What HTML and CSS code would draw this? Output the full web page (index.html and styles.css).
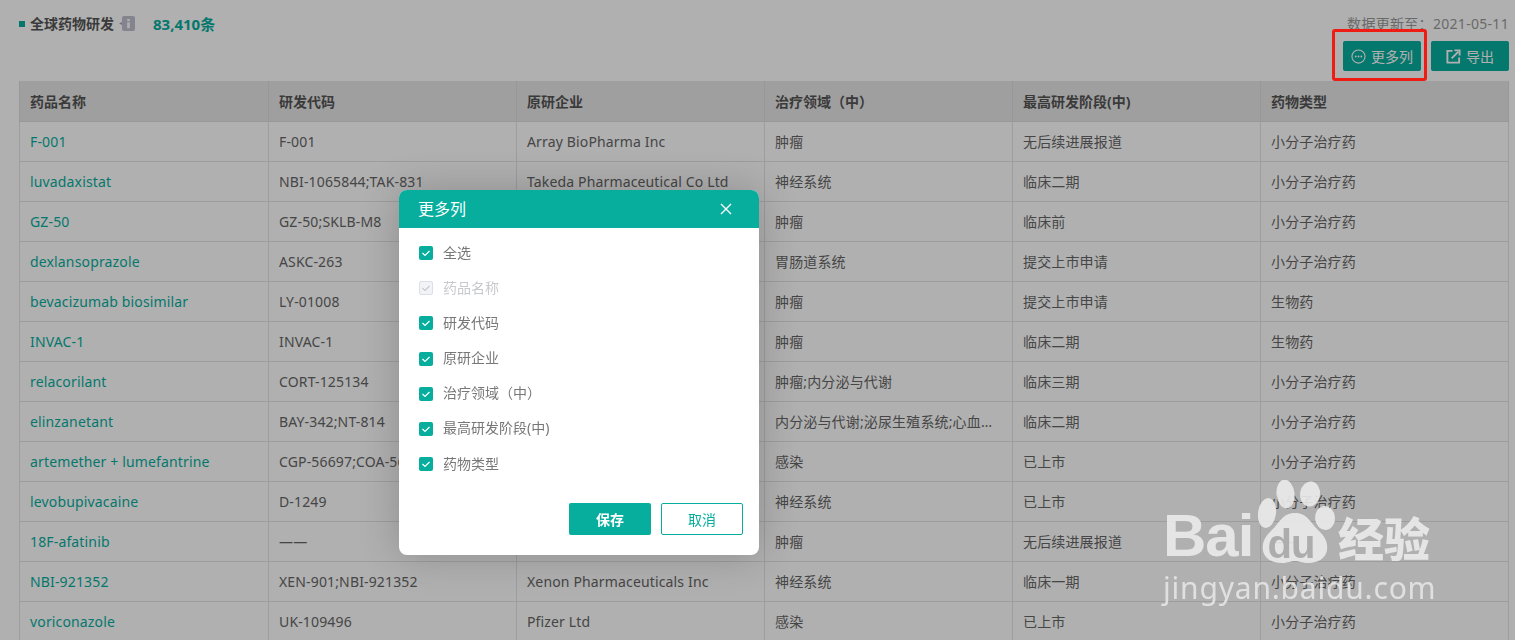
FILE: index.html
```html
<!DOCTYPE html>
<html lang="zh">
<head>
<meta charset="utf-8">
<title>全球药物研发</title>
<link rel="stylesheet" href="styles.css">
</head>
<body>
<main class="page">
  <div class="topbar">
    <div class="title-group">
      <span class="bullet"></span>
      <h1 class="title">全球药物研发</h1>
      <svg class="info" viewBox="0 0 16 15" width="16" height="15"><path d="M0 7.500 3 6v3z" fill="#a9a9b5"/><rect x="3" y="0" width="13" height="15" rx="2" fill="#bfc0cf"/><rect x="8.200" y="3" width="2.600" height="2.200" fill="#fff"/><rect x="8.200" y="6.400" width="2.600" height="5.800" fill="#fff"/></svg>
      <span class="count">83,410条</span>
    </div>
    <div class="tools">
      <div class="updated">数据更新至：2021-05-11</div>
      <div class="buttons">
        <button class="tool-btn">
          <svg viewBox="0 0 16 16" width="15" height="15"><circle cx="8" cy="8" r="7" fill="none" stroke="#fff" stroke-width="1.200"/><circle cx="5" cy="8" r="1" fill="#fff"/><circle cx="8" cy="8" r="1" fill="#fff"/><circle cx="11" cy="8" r="1" fill="#fff"/></svg>
          更多列
        </button>
        <button class="tool-btn">
          <svg viewBox="0 0 16 16" width="15" height="15"><path d="M7 2H1.500V14.500H14V9" fill="none" stroke="#fff" stroke-width="2"/><path d="M6 10 13 3M9 1.500H14.500V7" fill="none" stroke="#fff" stroke-width="2"/></svg>
          导出
        </button>
      </div>
    </div>
  </div>

  <table class="grid">
    <thead>
      <tr><th>药品名称</th><th>研发代码</th><th>原研企业</th><th>治疗领域（中）</th><th>最高研发阶段(中)</th><th>药物类型</th></tr>
    </thead>
    <tbody>
      <tr><td class="link">F-001</td><td>F-001</td><td>Array BioPharma Inc</td><td>肿瘤</td><td>无后续进展报道</td><td>小分子治疗药</td></tr>
      <tr><td class="link">luvadaxistat</td><td>NBI-1065844;TAK-831</td><td>Takeda Pharmaceutical Co Ltd</td><td>神经系统</td><td>临床二期</td><td>小分子治疗药</td></tr>
      <tr><td class="link">GZ-50</td><td>GZ-50;SKLB-M8</td><td>Sichuan University</td><td>肿瘤</td><td>临床前</td><td>小分子治疗药</td></tr>
      <tr><td class="link">dexlansoprazole</td><td>ASKC-263</td><td>Takeda Pharmaceutical Co Ltd</td><td>胃肠道系统</td><td>提交上市申请</td><td>小分子治疗药</td></tr>
      <tr><td class="link">bevacizumab biosimilar</td><td>LY-01008</td><td>Luye Pharma Group Ltd</td><td>肿瘤</td><td>提交上市申请</td><td>生物药</td></tr>
      <tr><td class="link">INVAC-1</td><td>INVAC-1</td><td>Invectys SA</td><td>肿瘤</td><td>临床二期</td><td>生物药</td></tr>
      <tr><td class="link">relacorilant</td><td>CORT-125134</td><td>Corcept Therapeutics Inc</td><td>肿瘤;内分泌与代谢</td><td>临床三期</td><td>小分子治疗药</td></tr>
      <tr><td class="link">elinzanetant</td><td>BAY-342;NT-814</td><td>Bayer AG</td><td>内分泌与代谢;泌尿生殖系统;心血管系统</td><td>临床二期</td><td>小分子治疗药</td></tr>
      <tr><td class="link">artemether + lumefantrine</td><td>CGP-56697;COA-566</td><td>Novartis AG</td><td>感染</td><td>已上市</td><td>小分子治疗药</td></tr>
      <tr><td class="link">levobupivacaine</td><td>D-1249</td><td>Chiroscience Group plc</td><td>神经系统</td><td>已上市</td><td>小分子治疗药</td></tr>
      <tr><td class="link">18F-afatinib</td><td>——</td><td>Boehringer Ingelheim</td><td>肿瘤</td><td>无后续进展报道</td><td>——</td></tr>
      <tr><td class="link">NBI-921352</td><td>XEN-901;NBI-921352</td><td>Xenon Pharmaceuticals Inc</td><td>神经系统</td><td>临床一期</td><td>小分子治疗药</td></tr>
      <tr><td class="link">voriconazole</td><td>UK-109496</td><td>Pfizer Ltd</td><td>感染</td><td>已上市</td><td>小分子治疗药</td></tr>
    </tbody>
  </table>
</main>

<div class="scrim"></div>
<div class="callout"></div>

<div class="watermark">
  <svg class="paw" viewBox="0 0 90 90" width="90" height="90">
    <ellipse cx="9" cy="33" rx="9" ry="15" transform="rotate(8 9 33)"/>
    <ellipse cx="27.500" cy="14" rx="9" ry="14.500" transform="rotate(-6 27.500 14)"/>
    <ellipse cx="52" cy="14" rx="10" ry="12.500" transform="rotate(8 52 14)"/>
    <ellipse cx="67" cy="38" rx="10" ry="12" transform="rotate(-5 67 38)"/>
    <path d="M37 33C50 33 52 43 62 52 74 63 72 83 50 83 44 83 42 81 37 81 32 81 30 83 24 83 2 83 0 63 12 52 22 43 24 33 37 33Z"/>
    <text class="paw-du" x="33" y="78">du</text>
  </svg>
  <div class="wm-logo"><span class="wm-bai">Bai</span><span class="wm-cn">经验</span></div>
  <div class="wm-url">jingyan.baidu.com</div>
</div>

<section class="dialog">
  <header class="dialog-head">
    <h2 class="dialog-title">更多列</h2>
    <svg class="close" viewBox="0 0 12 12" width="12" height="12"><path d="M1 1 11 11M11 1 1 11" stroke="#fff" stroke-width="1.400" fill="none"/></svg>
  </header>
  <div class="options">
    <label class="option"><span class="check"><svg viewBox="0 0 14 14" width="14" height="14"><path d="M3.500 7 6 9.500 10.500 5" /></svg></span><span class="option-text">全选</span></label>
    <label class="option is-disabled"><span class="check"><svg viewBox="0 0 14 14" width="14" height="14"><path d="M3.500 7 6 9.500 10.500 5" /></svg></span><span class="option-text">药品名称</span></label>
    <label class="option"><span class="check"><svg viewBox="0 0 14 14" width="14" height="14"><path d="M3.500 7 6 9.500 10.500 5" /></svg></span><span class="option-text">研发代码</span></label>
    <label class="option"><span class="check"><svg viewBox="0 0 14 14" width="14" height="14"><path d="M3.500 7 6 9.500 10.500 5" /></svg></span><span class="option-text">原研企业</span></label>
    <label class="option"><span class="check"><svg viewBox="0 0 14 14" width="14" height="14"><path d="M3.500 7 6 9.500 10.500 5" /></svg></span><span class="option-text">治疗领域（中）</span></label>
    <label class="option"><span class="check"><svg viewBox="0 0 14 14" width="14" height="14"><path d="M3.500 7 6 9.500 10.500 5" /></svg></span><span class="option-text">最高研发阶段(中)</span></label>
    <label class="option"><span class="check"><svg viewBox="0 0 14 14" width="14" height="14"><path d="M3.500 7 6 9.500 10.500 5" /></svg></span><span class="option-text">药物类型</span></label>
  </div>
  <footer class="dialog-foot">
    <button class="btn btn-primary">保存</button>
    <button class="btn btn-ghost">取消</button>
  </footer>
</section>
</body>
</html>
```
FILE: styles.css
```css
* { box-sizing: border-box; }
html, body { height: 100%; }
body {
  margin: 0;
  height: 640px;
  overflow: hidden;
  background: #fff;
  color: #666;
  font-family: "Noto Sans", "Noto Sans CJK SC", sans-serif;
  font-size: 14px;
}
.page { padding: 0 6px 0 19px; }

.topbar { display: flex; justify-content: space-between; height: 81px; }
.title-group { display: flex; align-items: center; height: 47px; }
.bullet { width: 6px; height: 6px; background: #07ae9e; margin-right: 5px; }
.title { margin: 0; font-size: 14px; font-weight: 700; color: #555; line-height: 20px; }
.info { margin-left: 5px; }
.count { margin-left: 18px; font-size: 15px; font-weight: 700; color: #07ae9e; }

.tools { display: flex; flex-direction: column; align-items: flex-end; padding-top: 14px; }
.updated { color: #999; line-height: 20px; letter-spacing: .3px; margin-bottom: 7px; }
.buttons { display: flex; gap: 10px; }
.tool-btn {
  display: flex; align-items: center; justify-content: center; gap: 5px;
  width: 78px; height: 30px; padding: 0;
  border: 0; border-radius: 2px;
  background: #07ae9e; color: #fff;
  font: inherit; font-size: 14px;
}

.grid { width: 1489px; table-layout: fixed; border-collapse: collapse; }
.grid th, .grid td {
  border: 1px solid #e4e4e4;
  padding: 0 10px;
  text-align: left;
  white-space: nowrap;
  overflow: hidden;
  text-overflow: ellipsis;
  height: 40px;
}
.grid th { width: 248px; background: #e6e6e6; color: #555; font-weight: 700; font-size: 14px; padding-top: 1px; border-top: 0; border-color: #dcdcdc; }
.grid th:first-child { width: 249px; }
.grid td { color: #666; font-size: 14px; letter-spacing: .15px; }
.grid td.link { color: #07ae9e; }

.scrim { position: fixed; inset: 0; background: rgba(0, 0, 0, .31); }
.callout {
  position: absolute; left: 1332px; top: 29px; width: 95px; height: 52px;
  border: 3px solid #ee1c12; border-radius: 3px;
}

.watermark { position: absolute; left: 1163px; top: 480px; width: 267px; height: 130px; color: rgba(255, 255, 255, .62); }
.paw { position: absolute; left: 95px; top: 0; fill: rgba(235, 235, 235, .9); }
.paw-du { font-family: "Liberation Sans", sans-serif; font-size: 40px; font-weight: 700; fill: #adadad; text-anchor: middle; letter-spacing: -1px; }
.wm-logo { display: flex; justify-content: space-between; padding-top: 24px; height: 88px; }
.wm-bai { font-family: "Liberation Sans", sans-serif; font-weight: 700; font-size: 60px; line-height: 64px; letter-spacing: -1px; color: rgba(235, 235, 235, .9); }
.wm-cn { font-family: "Noto Sans CJK SC", sans-serif; font-weight: 900; font-size: 46px; line-height: 64px; color: rgba(235, 235, 235, .9); }
.wm-url { font-family: "Noto Sans", sans-serif; font-size: 30px; line-height: 40px; letter-spacing: .8px; color: rgba(240, 240, 240, .75); white-space: nowrap; }

.dialog {
  position: absolute; left: 399px; top: 190px; width: 360px; height: 365px;
  display: flex; flex-direction: column;
  background: #fff; border-radius: 8px; overflow: hidden;
  box-shadow: 0 0 40px rgba(0, 0, 0, .2);
}
.dialog-head {
  display: flex; align-items: center; justify-content: space-between;
  height: 38px; flex: none; padding: 0 27px 0 19px;
  background: #07ae9e; color: #fff;
}
.dialog-title { margin: 0; font-size: 16px; font-weight: 400; line-height: 36px; }
.options { display: flex; flex-direction: column; gap: 15.200px; padding: 15px 20px 0; }
.option { display: flex; align-items: center; height: 20px; color: #777; font-size: 14px; }
.option-text { padding-bottom: 1px; line-height: 20px; }
.check {
  display: flex; width: 14px; height: 14px; margin-right: 10px;
  background: #07ae9e; border-radius: 2px;
}
.check path { fill: none; stroke: #fff; stroke-width: 1.200; }
.is-disabled { color: #c8c9cc; }
.is-disabled .check { background: #f2f3f7; border: 1px solid #dcdfe6; }
.is-disabled .check svg { margin: -1px; }
.is-disabled .check path { stroke: #c8c9cc; }

.dialog-foot { display: flex; justify-content: flex-end; gap: 10px; margin-top: auto; padding: 0 16px 20px; }
.btn { width: 82px; height: 32px; padding: 0; border-radius: 2px; font: inherit; font-size: 14px; }
.btn-primary { border: 0; background: #07ae9e; color: #fff; font-weight: 700; }
.btn-ghost { border: 1px solid #07ae9e; background: #fff; color: #07ae9e; }
```
